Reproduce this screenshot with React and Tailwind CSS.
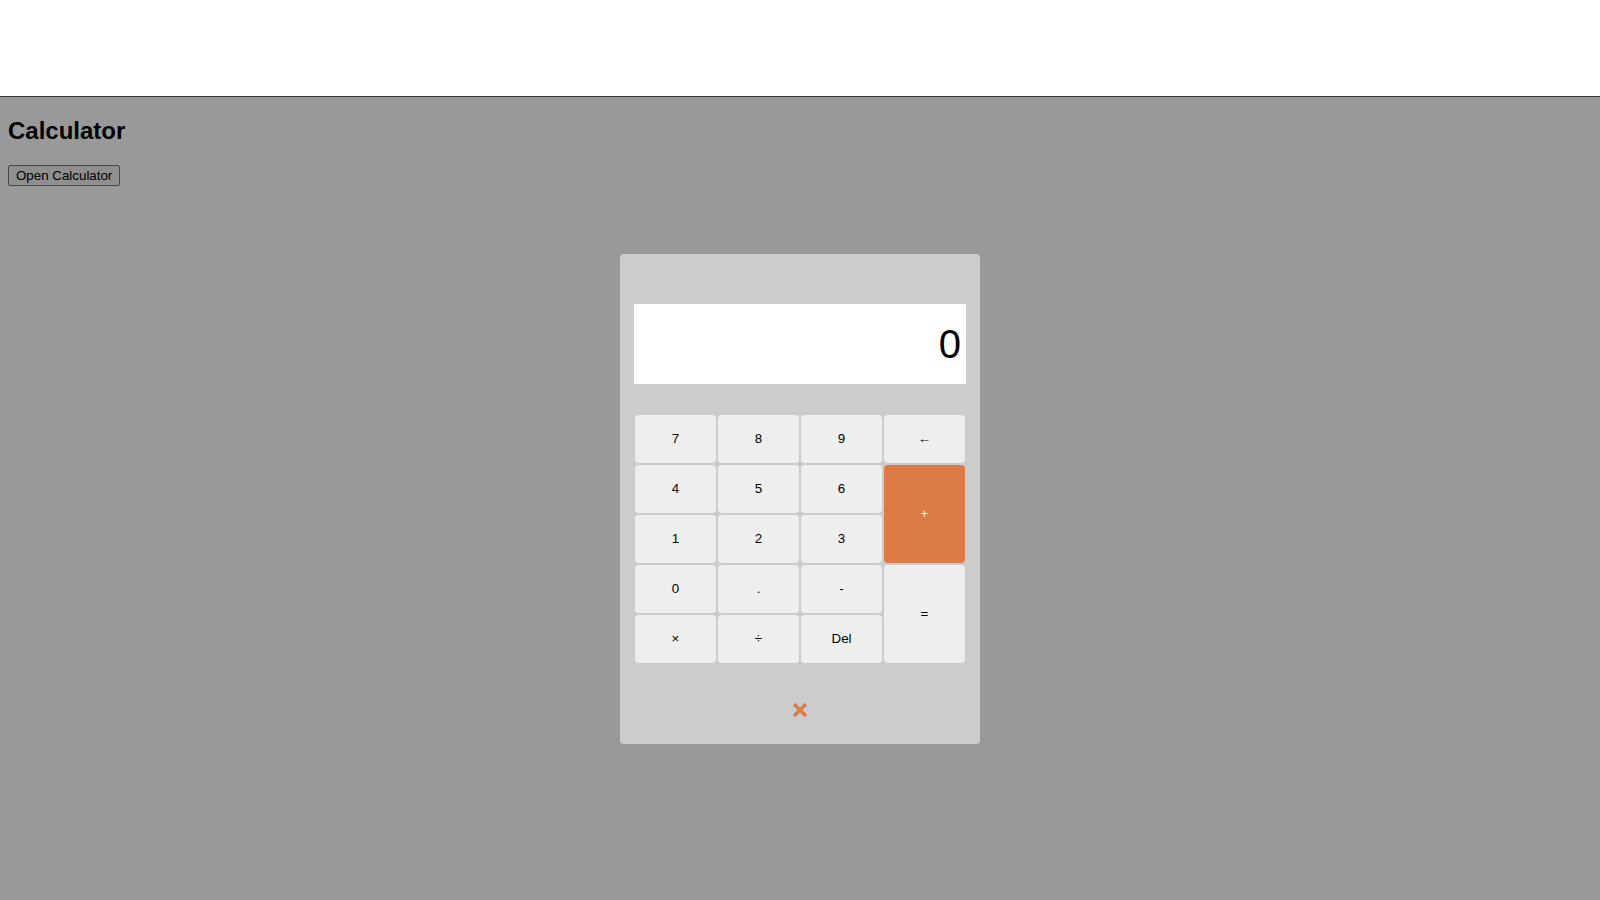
import { useState } from 'react'

const keys = [
  { label: '7', cls: 'col-start-1 row-start-1' },
  { label: '8', cls: 'col-start-2 row-start-1' },
  { label: '9', cls: 'col-start-3 row-start-1' },
  { label: '←', cls: 'col-start-4 row-start-1' },
  { label: '4', cls: 'col-start-1 row-start-2' },
  { label: '5', cls: 'col-start-2 row-start-2' },
  { label: '6', cls: 'col-start-3 row-start-2' },
  { label: '+', cls: 'col-start-4 row-start-2 row-span-2', accent: true },
  { label: '1', cls: 'col-start-1 row-start-3' },
  { label: '2', cls: 'col-start-2 row-start-3' },
  { label: '3', cls: 'col-start-3 row-start-3' },
  { label: '0', cls: 'col-start-1 row-start-4' },
  { label: '.', cls: 'col-start-2 row-start-4' },
  { label: '-', cls: 'col-start-3 row-start-4' },
  { label: '=', cls: 'col-start-4 row-start-4 row-span-2' },
  { label: '×', cls: 'col-start-1 row-start-5' },
  { label: '÷', cls: 'col-start-2 row-start-5' },
  { label: 'Del', cls: 'col-start-3 row-start-5' }
]

export default function App() {
  const [value] = useState('0')

  return (
    <div className="font-['Liberation_Sans',Arial,sans-serif] text-black">
      {/* top strip */}
      <div className="h-[97px] bg-white border-b border-[#363636]" />

      {/* page under overlay */}
      <div className="h-[803px] bg-[#999999] overflow-hidden">
        <h2 className="ml-2 mt-[20px] text-[24px] font-bold leading-[27.6px]">Calculator</h2>
        <button className="block ml-2 mt-[20px] h-[21px] px-[7px] pt-[2px] text-[13.33px] leading-none bg-[#8f8f8f] border border-[#474747] rounded-[2px]">
          Open Calculator
        </button>

        {/* calculator */}
        <div className="mx-auto mt-[68px] w-[360px] h-[490px] rounded-[4px] bg-[#cccccc] px-[14px] pt-[50px]">
          <div className="h-[80px] bg-white flex items-center justify-end pr-[5px] text-[40px] leading-none">
            {value}
          </div>

          <div className="mt-[30px] grid grid-cols-4 grid-rows-[repeat(5,50px)]">
            {keys.map(k => (
              <button
                key={k.label}
                className={`${k.cls} m-px pt-px rounded-[4px] text-[13.33px] flex items-center justify-center ${
                  k.accent ? 'bg-[#dc7b47] text-white' : 'bg-[#eeeeee] text-black'
                }`}
              >
                {k.label}
              </button>
            ))}
          </div>

          <div className="mt-[38px] flex justify-center">
            <svg width="16" height="16" viewBox="0 0 16 16">
              <path d="M2 2 L14 14 M14 2 L2 14" stroke="#dc7b47" strokeWidth="3.2" strokeLinecap="butt" />
            </svg>
          </div>
        </div>
      </div>
    </div>
  )
}
